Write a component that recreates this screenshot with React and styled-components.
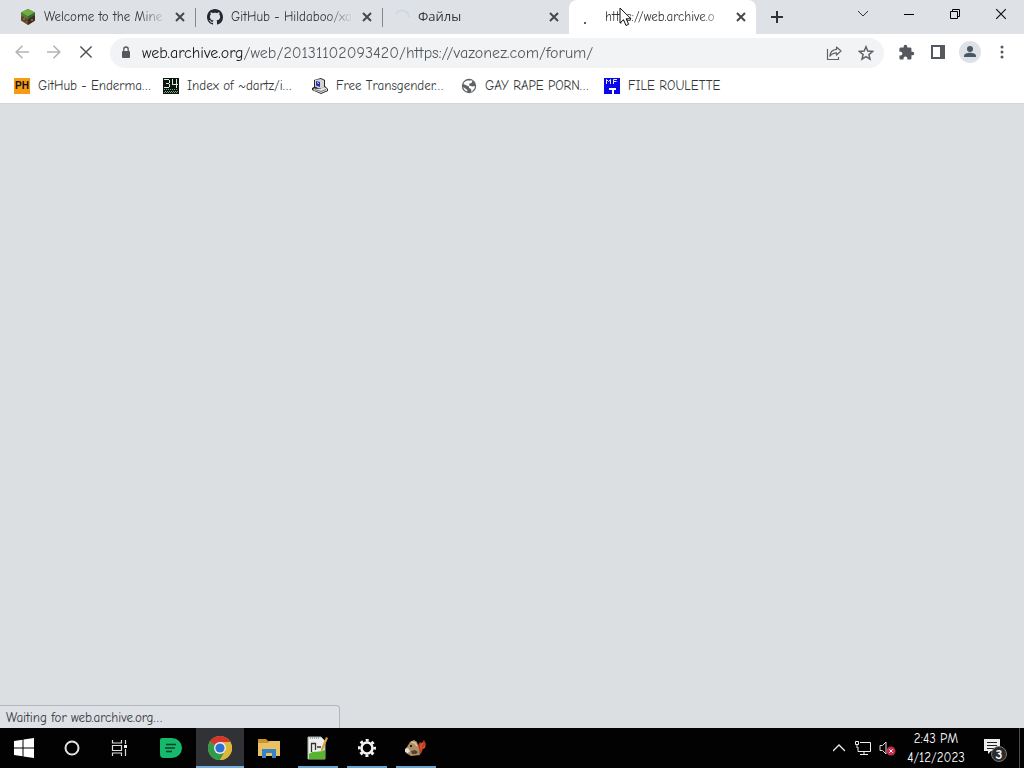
import React from 'react';
import styled, { createGlobalStyle } from 'styled-components';

const GlobalStyle = createGlobalStyle`
  * { box-sizing: border-box; }
  body {
    margin: 0;
    font-family: 'Comic Sans MS', 'Comic Neue', 'Open Sans', 'Liberation Sans', sans-serif;
    font-size: 13px;
    color: #34373a;
  }
  button, input { font: inherit; color: inherit; }
  button { border: 0; padding: 0; background: none; }
  svg { display: block; flex: none; }
`;

const Screen = styled.div`
  min-height: 100vh;
  display: flex;
  flex-direction: column;
  background: #dbdfe2;
`;

const TabStrip = styled.header`
  height: 34px;
  display: flex;
  align-items: stretch;
  padding-left: 8px;
  background: #dee1e6;
`;

const Tab = styled.div`
  position: relative;
  flex: 0 1 187px;
  min-width: 0;
  display: flex;
  align-items: center;
  padding: 0 7px 0 12px;
  border-radius: ${(p) => (p.$active ? '8px 8px 0 0' : '0')};
  background: ${(p) => (p.$active ? '#fff' : 'transparent')};
  &::after {
    content: '';
    position: absolute;
    right: -1px;
    top: 8px;
    height: 19px;
    width: 1px;
    background: ${(p) => (p.$divider ? '#85898d' : 'transparent')};
  }
`;

const TabSelect = styled.button`
  flex: 1;
  min-width: 0;
  display: flex;
  align-items: center;
  gap: 8px;
  text-align: left;
`;

const TabTitle = styled.span`
  flex: 1;
  overflow: hidden;
  white-space: nowrap;
  line-height: 18px;
  margin-right: 8px;
  mask-image: linear-gradient(90deg, #000 80%, rgba(0, 0, 0, 0.1));
`;

const IconButton = styled.button`
  width: ${(p) => p.$size || 32}px;
  height: ${(p) => p.$size || 32}px;
  flex: none;
  display: grid;
  place-items: center;
`;

const NewTab = styled(IconButton)`
  margin-left: 7px;
  align-self: center;
`;

const WindowControls = styled.div`
  display: flex;
  margin-left: auto;
`;

const WindowButton = styled.button`
  width: 46px;
  height: 28px;
  display: grid;
  place-items: center;
`;

const Toolbar = styled.nav`
  height: 36px;
  display: flex;
  align-items: center;
  padding: 0 6px;
  background: #fff;
`;

const Omnibox = styled.div`
  flex: 1;
  min-width: 0;
  height: 30px;
  display: flex;
  align-items: center;
  margin: 2px 6px 0 8px;
  padding: 0 2px 0 8px;
  border-radius: 15px;
  background: #f1f3f4;
`;

const Address = styled.input`
  flex: 1;
  min-width: 0;
  height: 24px;
  margin-left: 8px;
  border: 0;
  padding: 0;
  outline: 0;
  font-size: 16px;
  color: transparent;
  background: linear-gradient(90deg, #1b1c1f 102px, #54585c 102px);
  background-clip: text;
`;

const Bookmarks = styled.nav`
  height: 34px;
  display: flex;
  align-items: center;
  gap: 16px;
  padding: 0 14px 2px;
  background: #fff;
  border-bottom: 1px solid #d5d8db;
`;

const Bookmark = styled.a`
  flex: 0 0 133px;
  min-width: 0;
  display: flex;
  align-items: center;
  gap: 8px;
  color: #34373a;
  text-decoration: none;
  white-space: nowrap;
  &:nth-child(4) { flex-basis: 127px; }
`;

const Content = styled.main`
  flex: 1;
  display: flex;
  align-items: flex-end;
`;

const StatusBubble = styled.div`
  width: 340px;
  height: 23px;
  padding: 0 6px;
  line-height: 24px;
  background: #dee1e6;
  border: 1px solid #b4b8bb;
  border-width: 1px 1px 0 0;
  border-radius: 0 4px 0 0;
`;

const Taskbar = styled.footer`
  height: 40px;
  display: flex;
  align-items: stretch;
  background: #020203;
  color: #fff;
`;

const SystemButtons = styled.div`
  display: flex;
  margin-right: 3px;
`;

const Apps = styled.div`
  display: flex;
  gap: 1px;
  flex: 1;
`;

const TaskButton = styled.button`
  width: 48px;
  display: grid;
  place-items: center;
  background: ${(p) => (p.$active ? '#303235' : 'transparent')};
  box-shadow: ${(p) => (p.$active ? 'inset 0 -2px #76b0e0' : 'none')};
`;

const RunningButton = styled(TaskButton)`
  width: 40px;
  margin: 0 4px;
  box-shadow: inset 0 -2px #6aa5d2;
`;

const Tray = styled.div`
  display: flex;
  align-items: center;
`;

const Clock = styled.time`
  width: 74px;
  text-align: center;
  line-height: 19px;
  color: #fff;
`;

const Notifications = styled(TaskButton)`
  width: 46px;
  height: 40px;
`;

const ShowDesktop = styled.button`
  width: 5px;
  height: 40px;
  border-left: 1px solid #4c4c4c;
`;

const Pointer = styled.svg`
  position: absolute;
  left: 619px;
  top: 7px;
  pointer-events: none;
`;

const Cross = ({ size, color = '#45494d', weight = 2 }) => (
  <svg width={size} height={size} viewBox="0 0 10 10" stroke={color} strokeWidth={weight}>
    <path d="M1 1l8 8M9 1l-8 8" />
  </svg>
);

const GrassBlock = () => (
  <svg width="16" height="16" viewBox="0 0 16 16">
    <path d="M8 0l7 3.5v8L8 16l-7-4.500v-8z" fill="#60422c" />
    <path d="M8 7.500l7-4v8L8 16z" fill="#3f2d22" />
    <path d="M8 0l7 3.500-7 4-7-4z" fill="#6cae42" />
    <path d="M1 3.500l7 4v3l-2-1v-1l-2 1v-2l-2 0-1-1z" fill="#527f31" />
    <path d="M15 3.500l-7 4v2l2 0v-1l2 0v-1l3-1z" fill="#3b6529" />
    <path d="M3 9h2v2H3zm3 3h1v2H6zM11 10h2v2h-2z" fill="#8a6145" />
  </svg>
);

const GitHubMark = () => (
  <svg width="16" height="16" viewBox="0 0 16 16" fill="#24292f">
    <path d="M8 0C3.580 0 0 3.580 0 8c0 3.540 2.290 6.530 5.470 7.590.4.070.55-.17.55-.38 0-.19-.01-.82-.01-1.490-2.010.37-2.530-.49-2.690-.94-.09-.23-.48-.94-.82-1.130-.28-.15-.68-.52-.01-.53.63-.01 1.080.58 1.230.82.72 1.210 1.870.87 2.330.66.07-.52.28-.87.51-1.070-1.780-.2-3.640-.89-3.640-3.950 0-.87.31-1.590.82-2.150-.08-.2-.36-1.020.08-2.120 0 0 .67-.21 2.200.82.64-.18 1.320-.27 2-.27s1.360.09 2 .27c1.530-1.040 2.200-.82 2.200-.82.44 1.100.16 1.920.08 2.120.51.56.82 1.270.82 2.150 0 3.070-1.870 3.750-3.650 3.950.29.25.54.73.54 1.480 0 1.070-.01 1.930-.01 2.200 0 .21.15.46.55.38A8 8 0 0 0 16 8c0-4.420-3.580-8-8-8z" />
  </svg>
);

const FaintSpinner = () => (
  <svg width="16" height="16" viewBox="0 0 16 16" fill="none" stroke="#cfd9e4" strokeWidth="2">
    <path d="M2 5a7 7 0 0 1 13 3" />
  </svg>
);

const SpinnerDot = () => (
  <svg width="16" height="16" viewBox="0 0 16 16">
    <rect x="3" y="13" width="2" height="2" fill="#55595d" />
  </svg>
);

const Chip = styled.span`
  width: 16px;
  height: 16px;
  flex: none;
  display: grid;
  place-items: center;
  font: bold 10px/16px 'Liberation Sans', sans-serif;
  background: #f59b14;
  color: #111;
`;

const PixelThirtyFour = () => (
  <svg width="16" height="16" viewBox="0 0 16 16" shapeRendering="crispEdges">
    <path fill="#0b160e" d="M0 0h16v16H0z" />
    <path fill="none" stroke="#dfe9df" d="M1 1.500h5M6.500 2v3M3 5.500h3M6.500 6v3M1 9.500h5M9.500 1v5M9 6.500h6M13.500 1v9" />
    <path stroke="#79a884" strokeDasharray="1 1" d="M1 11.500h14M2 13.500h14M1 14.500h14" />
  </svg>
);

const OldComputer = () => (
  <svg width="16" height="16" viewBox="0 0 16 16">
    <path d="M2 2l7-2 4 2v6l3 3v2l-7 3-9-4v-2l2-1z" fill="#26272b" />
    <path d="M3 2l6-1 3 1.500v7l-5 1-4-2z" fill="#d4d4d8" />
    <path d="M4 3l4 1v5L4 7.500z" fill="#2730a4" />
    <path d="M5 4l2 1v1L5 5z" fill="#e5e9ff" />
    <path d="M1.500 10.500l6 .5 5-2 2.500 2v1.500l-6 2.500-7.500-3z" fill="#e5e5e5" />
    <path d="M3 11.500l6 2 5-2" fill="none" stroke="#777" />
  </svg>
);

const Globe = () => (
  <svg width="16" height="16" viewBox="0 0 16 16">
    <circle cx="8" cy="8" r="7.200" fill="#5f6368" />
    <path d="M7 2.500h4.500l-1 2.500-2 .500-.5 2 3.500 1 2.500-.5-.5 2.500-3 3.500-.5-3-2-1V8.500L4.500 7l-2-1C3 4 5 2.600 7 2.500z" fill="#fff" />
    <path d="M2.300 9l4 3v1.500c-2-.5-3.600-2-4-4.500z" fill="#fff" />
  </svg>
);

const MftIcon = () => (
  <svg width="16" height="16" viewBox="0 0 16 16">
    <path fill="#0907e8" d="M0 0h16v16H0z" />
    <path fill="none" stroke="#e9e9ff" d="M2.500 6V1.500l2 2 2-2V6M9.500 6V1.500H13M9.500 3.500h3" />
    <path fill="#fff" d="M5 10h7v2h-2v4H8v-4H5z" />
  </svg>
);

const Arrow = ({ back }) => (
  <svg width="14" height="14" viewBox="0 0 14 14" fill="none" stroke="#b2b4b7" strokeWidth="1.600">
    <path d={back ? 'M14 7H1M7.500 .8L1.200 7l6.300 6.200' : 'M0 7h13M6.500 .8L12.800 7l-6.300 6.200'} />
  </svg>
);

const Lock = () => (
  <svg width="16" height="16" viewBox="0 0 16 16">
    <rect x="4" y="6" width="8" height="7" rx="1" fill="#55585c" />
    <path d="M5.800 7V4.200a2.200 2.200 0 0 1 4.400 0V7" fill="none" stroke="#55585c" strokeWidth="1.300" />
  </svg>
);

const Share = () => (
  <svg width="16" height="16" viewBox="0 0 16 16" fill="none" stroke="#5f6368" strokeWidth="1.200">
    <path d="M1.500 4v10.500h11V12" />
    <path d="M10.500 2l4.500 4-4.500 4V7.800C7.500 7.800 5.500 9 3.800 11.200 4.200 7.500 6.500 4.700 10.500 4.400z" strokeLinejoin="round" />
  </svg>
);

const Star = () => (
  <svg width="16" height="16" viewBox="0 0 16 16" fill="none" stroke="#5f6368" strokeWidth="1.500">
    <path d="M8 1.800l1.800 4.300 4.700.4-3.600 3.100 1.100 4.600L8 11.700l-4 2.500 1.100-4.600-3.600-3.100 4.700-.4z" />
  </svg>
);

const Puzzle = () => (
  <svg width="17" height="17" viewBox="0 0 24 24" fill="#55595d">
    <path d="M20.500 11H19V7c0-1.100-.9-2-2-2h-4V3.500a2.500 2.500 0 0 0-5 0V5H4c-1.100 0-2 .9-2 2v3.800h1.500a2.700 2.700 0 0 1 0 5.400H2V20c0 1.100.9 2 2 2h3.800v-1.500a2.700 2.700 0 0 1 5.400 0V22H17c1.100 0 2-.9 2-2v-4h1.500a2.500 2.500 0 0 0 0-5z" />
  </svg>
);

const SidePanel = () => (
  <svg width="14" height="14" viewBox="0 0 14 14">
    <path d="M1 1h12v12H1z" fill="#fff" stroke="#55595d" strokeWidth="2" />
    <path d="M9 1h5v12H9z" fill="#55595d" />
  </svg>
);

const Profile = () => (
  <svg width="22" height="22" viewBox="0 0 22 22" fill="#4a5866">
    <circle cx="11" cy="11" r="11" fill="#dee1e6" />
    <circle cx="11" cy="8" r="3" />
    <path d="M5 16v-1c0-2.200 3-3.200 6-3.200s6 1 6 3.200v1z" />
  </svg>
);

const Kebab = () => (
  <svg width="4" height="14" viewBox="0 0 4 14" fill="#55595d">
    <circle cx="2" cy="2" r="1.500" />
    <circle cx="2" cy="7" r="1.500" />
    <circle cx="2" cy="12" r="1.500" />
  </svg>
);

const WindowsLogo = () => (
  <svg width="20" height="20" viewBox="0 0 20 20" fill="#fff">
    <path d="M0 3l8.500-1.200v7.700H0zM9.500 1.600L20 0v9.500H9.500zM0 10.500h8.500v7.700L0 17zM9.500 10.500H20V20L9.500 18.400z" />
  </svg>
);

const Cortana = () => (
  <svg width="16" height="16" viewBox="0 0 16 16">
    <circle cx="8" cy="8" r="6.500" fill="none" stroke="#e4e4e4" strokeWidth="2" />
  </svg>
);

const TaskView = () => (
  <svg width="18" height="16" viewBox="0 0 18 16" fill="none" stroke="#ddd" strokeWidth="1.200">
    <path d="M1.500 0v3h9V0M1.500 16v-3h9v3M1.500 5.500h9v5h-9zM14.500 0v4M14.500 9v7" />
    <path d="M13 5h3v3h-3z" fill="#eee" stroke="none" />
  </svg>
);

const GreenNote = () => (
  <svg width="22" height="20" viewBox="0 0 22 20">
    <path d="M0 2a2 2 0 0 1 2-2h10a10 10 0 0 1 0 20H4a4 4 0 0 1-4-4z" fill="#14b96b" />
    <path d="M6 6.500h10M5 10h10M6 13.500h6" stroke="#073f27" strokeWidth="1.500" />
  </svg>
);

const Chrome = () => (
  <svg width="24" height="24" viewBox="0 0 24 24">
    <circle cx="12" cy="12" r="12" fill="#ddb73c" />
    <path d="M12 12L1.600 6A12 12 0 0 1 22.400 6z" fill="#d3372c" />
    <path d="M1.600 6A12 12 0 0 0 12 24l5.200-9z" fill="#2f9b4b" />
    <path d="M12 6h10.400a12 12 0 0 1-10.400 18l5.200-9z" fill="#ddb73c" />
    <circle cx="12" cy="12" r="6" fill="#f0f0f0" />
    <circle cx="12" cy="12" r="4.600" fill="#2d6fd4" />
  </svg>
);

const Folder = () => (
  <svg width="22" height="20" viewBox="0 0 22 20">
    <path d="M0 1h8l2 2h12v15H0z" fill="#c9952c" />
    <path d="M0 5h10l2-2h10v15H0z" fill="#e9c062" />
    <path d="M4 11h14v9h-4v-5H8v5H4z" fill="#3483c7" />
  </svg>
);

const Editor = () => (
  <svg width="22" height="24" viewBox="0 0 22 24">
    <path d="M1 1h13l4 4v18H1z" fill="#eee" stroke="#a9b0a4" />
    <path d="M2 18c5-4 10-1 16-4v9H2z" fill="#57b52d" />
    <path d="M4.500 7v9M8.500 7v7M4 7.500h5M10 11h4" stroke="#30352e" strokeWidth="1.300" />
    <path d="M21 2l-5 12-2 2v-3l5-12z" fill="#d1a244" />
    <path d="M3 2h10" stroke="#9eacb0" strokeDasharray="1 1" strokeWidth="2" />
  </svg>
);

const Gear = () => (
  <svg width="20" height="20" viewBox="0 0 20 20" fill="none" stroke="#f3f3f3">
    <circle cx="10" cy="10" r="5.500" strokeWidth="2.600" />
    <circle cx="10" cy="10" r="7.700" strokeWidth="2.600" strokeDasharray="3.024 3.024" strokeDashoffset="1.512" />
  </svg>
);

const Squirrel = () => (
  <svg width="22" height="18" viewBox="0 0 22 18">
    <path d="M13 13V6l2-3 2 1 2-3 2 4-1 4-2 1-2 5z" fill="#b83b1e" />
    <path d="M2 8l3-5 4-2 3 2 2 7 1 6-9 1-5-3-1-4z" fill="#b08f68" />
    <path d="M0 10l3-1 2 3-2 2-3-1z" fill="#e4e0d6" />
    <path d="M5 6h2v2H5z" fill="#2c1b14" />
    <path d="M6 12l4-1 3 2-2 2H7z" fill="#574131" />
    <path d="M6 3l4 1 2 3" fill="none" stroke="#d9c29c" strokeWidth="1.500" />
    <path d="M16 11V6l2-2M18 9l2-2" fill="none" stroke="#e15a2c" strokeWidth="1.300" />
  </svg>
);

const Network = () => (
  <svg width="18" height="16" viewBox="0 0 18 16" fill="none" stroke="#eee">
    <path d="M6 2.500h10.500v9H4V7M10 12v2.500M6 14.500h8M1.500 1.500h3v3h-3zM3 5v3" />
  </svg>
);

const Muted = () => (
  <svg width="18" height="16" viewBox="0 0 18 16">
    <path d="M2 5.500h2.500L8 2v12l-3.500-3.500H2z" fill="none" stroke="#ddd" />
    <circle cx="13" cy="11" r="4.500" fill="#c62d49" />
    <path d="M11.300 9.300l3.400 3.400M14.700 9.300l-3.400 3.400" stroke="#fff" />
  </svg>
);

const ActionCenter = () => (
  <svg width="26" height="28" viewBox="0 0 26 28">
    <path d="M1 5h16v12H8l-3 3v-3H1z" fill="#eee" />
    <path d="M4 8.500h10M4 11.500h10M4 14.500h7" stroke="#222" />
    <circle cx="16" cy="20" r="7.500" fill="#2b2b2c" stroke="#777" />
    <text x="16" y="25" textAnchor="middle" fontSize="14" fontWeight="bold" fill="#fff">3</text>
  </svg>
);

const tabs = [
  { title: 'Welcome to the Mine', icon: <GrassBlock />, divider: true },
  { title: 'GitHub - Hildaboo/xo', icon: <GitHubMark />, divider: true },
  { title: 'Файлы', icon: <FaintSpinner /> },
  { title: 'https://web.archive.o', icon: <SpinnerDot />, active: true },
];

const bookmarks = [
  { title: 'GitHub - Enderma…', icon: <Chip>PH</Chip> },
  { title: 'Index of ~dartz/i…', icon: <PixelThirtyFour /> },
  { title: 'Free Transgender…', icon: <OldComputer /> },
  { title: 'GAY RAPE PORN…', icon: <Globe /> },
  { title: 'FILE ROULETTE', icon: <MftIcon /> },
];

export default function App() {
  return (
    <Screen>
      <GlobalStyle />
      <TabStrip>
        {tabs.map((tab) => (
          <Tab key={tab.title} $active={tab.active} $divider={tab.divider}>
            <TabSelect>
              {tab.icon}
              <TabTitle>{tab.title}</TabTitle>
            </TabSelect>
            <IconButton $size={16} aria-label="Close tab"><Cross size={10} /></IconButton>
          </Tab>
        ))}
        <NewTab $size={28} aria-label="New tab">
          <svg width="12" height="12" viewBox="0 0 12 12" stroke="#303336" strokeWidth="2"><path d="M6 0v12M0 6h12" /></svg>
        </NewTab>
        <WindowControls>
          <WindowButton aria-label="Search tabs">
            <svg width="12" height="8" viewBox="0 0 12 8" fill="none" stroke="#333"><path d="M1 1l5 5 5-5" /></svg>
          </WindowButton>
          <WindowButton aria-label="Minimize">
            <svg width="10" height="1" viewBox="0 0 10 1"><path d="M0 0h10v1H0z" /></svg>
          </WindowButton>
          <WindowButton aria-label="Restore">
            <svg width="10" height="10" viewBox="0 0 10 10" fill="none" stroke="#000"><path d="M.5 2.500h7v7h-7zM2.500 2.500v-2h7v7h-2" /></svg>
          </WindowButton>
          <WindowButton aria-label="Close"><Cross size={12} color="#111" weight={1} /></WindowButton>
        </WindowControls>
      </TabStrip>
      <Toolbar>
        <IconButton aria-label="Back"><Arrow back /></IconButton>
        <IconButton aria-label="Forward"><Arrow /></IconButton>
        <IconButton aria-label="Stop"><Cross size={14} color="#4b4e52" weight={1} /></IconButton>
        <Omnibox>
          <Lock />
          <Address aria-label="Address" defaultValue="web.archive.org/web/20131102093420/https://vazonez.com/forum/" />
          <IconButton aria-label="Share"><Share /></IconButton>
          <IconButton aria-label="Bookmark"><Star /></IconButton>
        </Omnibox>
        <IconButton aria-label="Extensions"><Puzzle /></IconButton>
        <IconButton aria-label="Side panel"><SidePanel /></IconButton>
        <IconButton aria-label="Profile"><Profile /></IconButton>
        <IconButton aria-label="Menu"><Kebab /></IconButton>
      </Toolbar>
      <Bookmarks>
        {bookmarks.map((b) => (
          <Bookmark key={b.title} href="#">{b.icon}<span>{b.title}</span></Bookmark>
        ))}
      </Bookmarks>
      <Content>
        <StatusBubble role="status">Waiting for web.archive.org…</StatusBubble>
      </Content>
      <Taskbar>
        <SystemButtons>
          <TaskButton aria-label="Start"><WindowsLogo /></TaskButton>
          <TaskButton aria-label="Cortana"><Cortana /></TaskButton>
          <TaskButton aria-label="Task view"><TaskView /></TaskButton>
        </SystemButtons>
        <Apps>
          <TaskButton aria-label="Notes"><GreenNote /></TaskButton>
          <TaskButton aria-label="Chrome" $active><Chrome /></TaskButton>
          <TaskButton aria-label="Files"><Folder /></TaskButton>
          <RunningButton aria-label="Editor"><Editor /></RunningButton>
          <RunningButton aria-label="Settings"><Gear /></RunningButton>
          <RunningButton aria-label="Squirrel"><Squirrel /></RunningButton>
        </Apps>
        <Tray>
          <IconButton $size={24} aria-label="Hidden icons">
            <svg width="12" height="8" viewBox="0 0 12 8" fill="none" stroke="#eee" strokeWidth="1.300"><path d="M0 7l6-6 6 6" /></svg>
          </IconButton>
          <IconButton $size={24} aria-label="Network"><Network /></IconButton>
          <IconButton $size={24} aria-label="Volume"><Muted /></IconButton>
          <Clock>2:43 PM<br />4/12/2023</Clock>
          <Notifications aria-label="Notifications"><ActionCenter /></Notifications>
          <ShowDesktop aria-label="Show desktop" />
        </Tray>
      </Taskbar>
      <Pointer width="14" height="20" viewBox="0 0 14 20">
        <path d="M1 1v15l3.500-3.300L7 18.500l2.600-1.200L7.200 11.800H12z" fill="#fff" stroke="#111" />
      </Pointer>
    </Screen>
  );
}
